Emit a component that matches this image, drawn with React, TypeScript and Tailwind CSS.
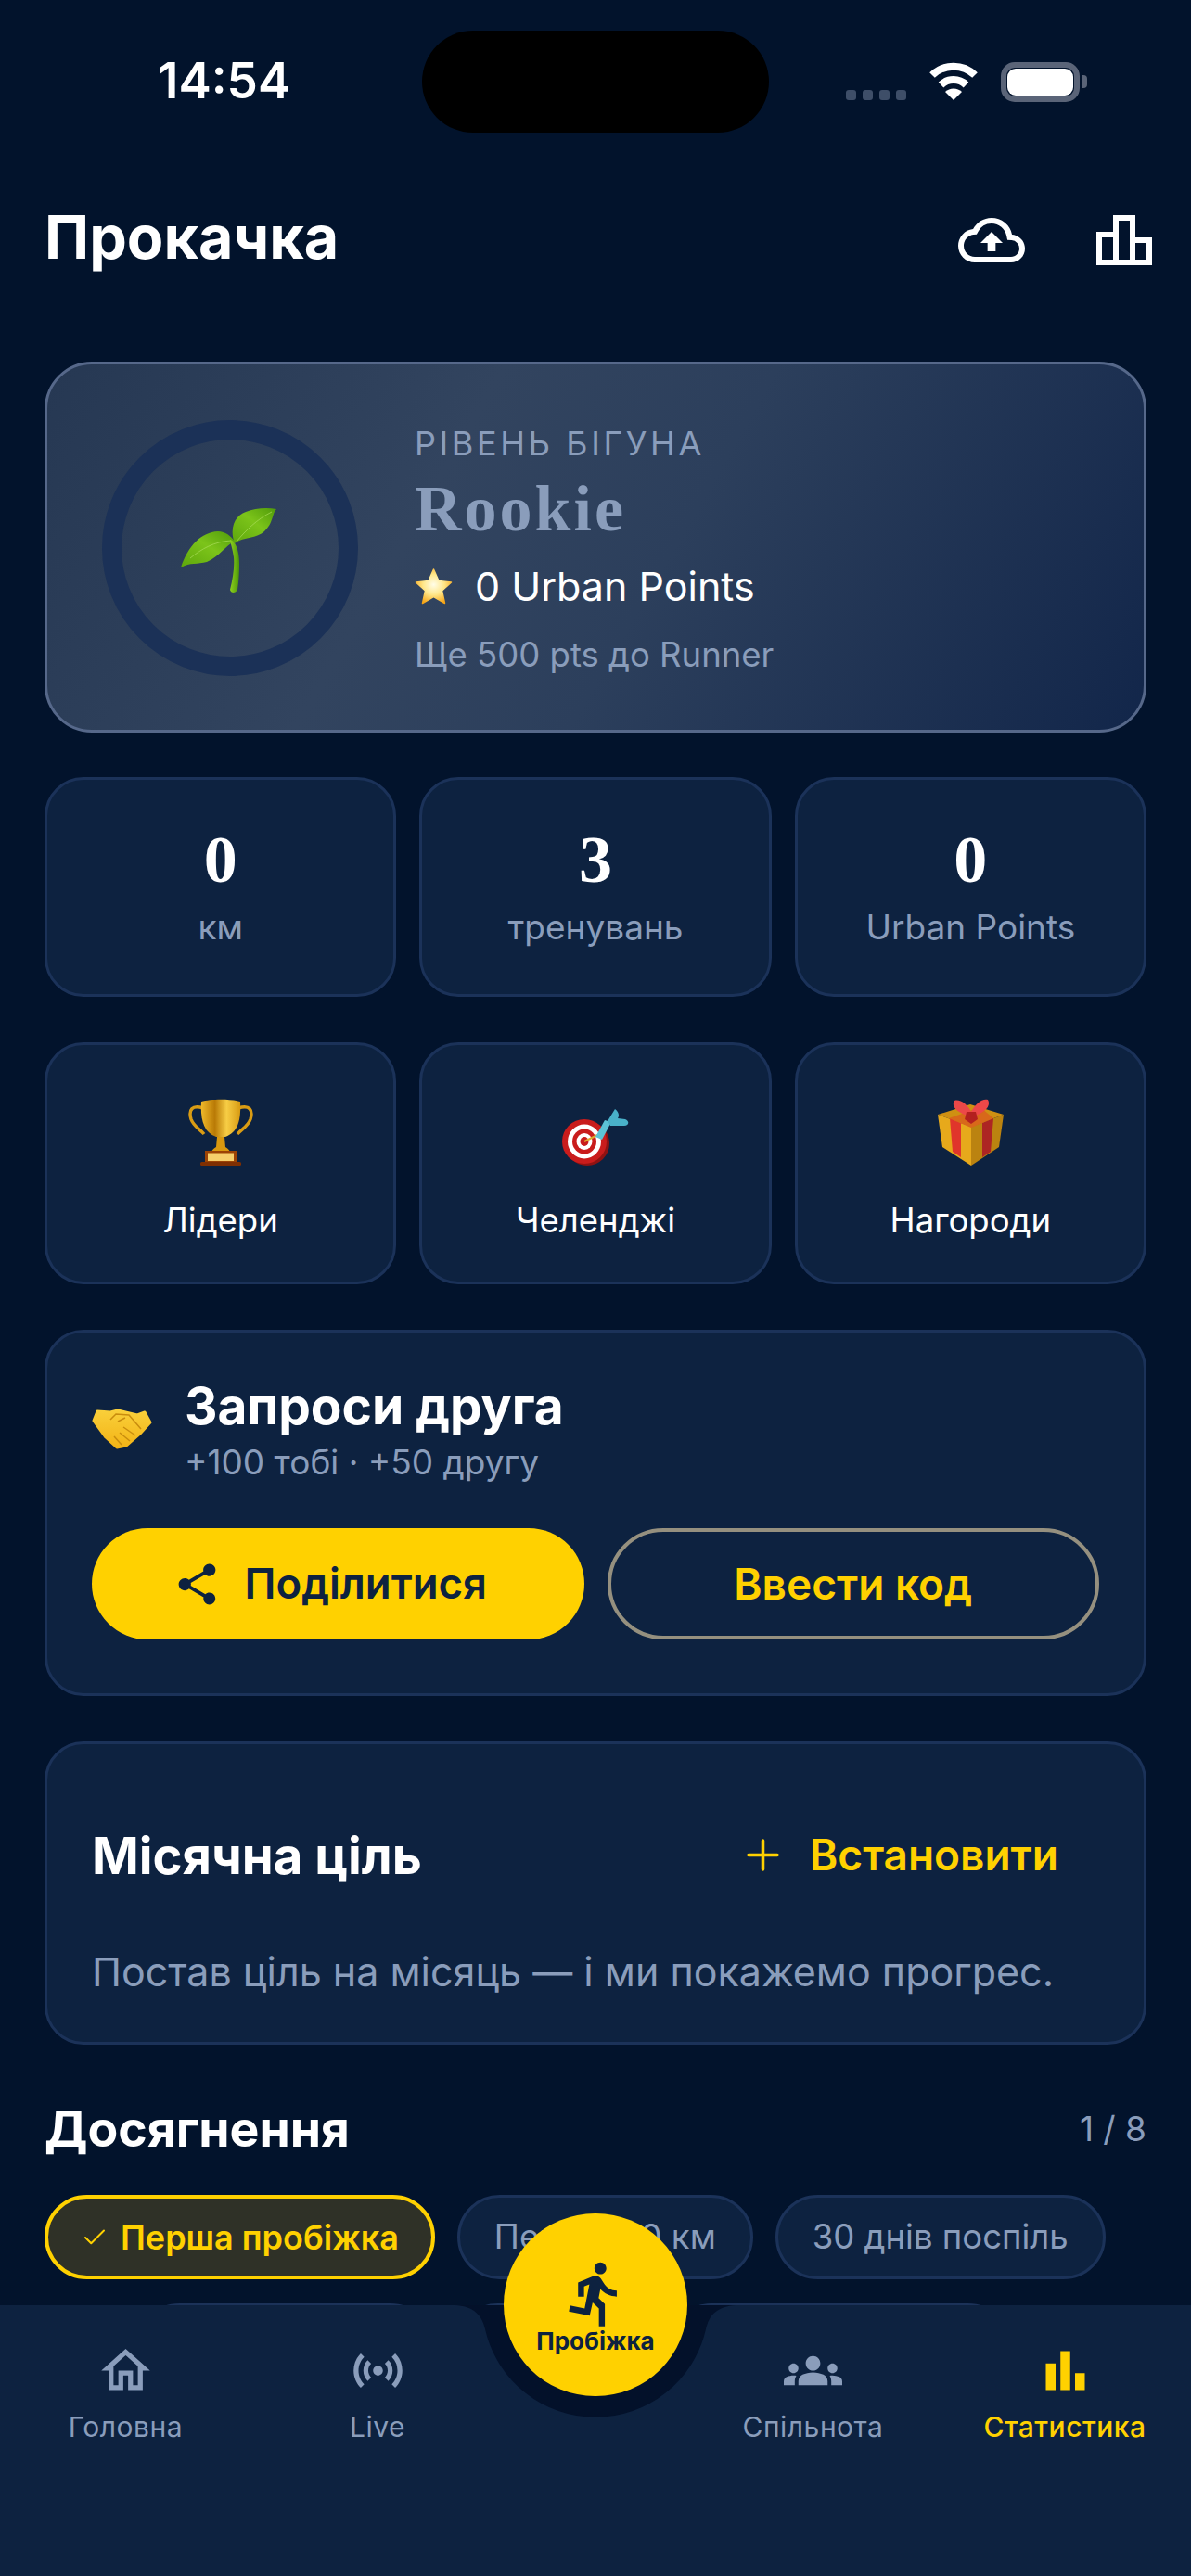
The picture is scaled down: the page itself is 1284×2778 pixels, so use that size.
// Прокачка screen
import React from 'react';
import { Check, Plus } from 'lucide-react';
import {
  MdBarChart,
  MdDirectionsRun,
  MdGroups,
  MdOutlineCloudUpload,
  MdOutlineHome,
  MdOutlineLeaderboard,
  MdSensors,
  MdShare,
} from 'react-icons/md';

const Sprout = () => (
  <svg className="mt-[8px]" width="110" height="98" viewBox="0 0 110 98">
    <defs>
      <linearGradient id="leafA" x1="0" y1="1" x2="1" y2="0">
        <stop offset="0" stopColor="#5da60c" />
        <stop offset="0.55" stopColor="#7cc41a" />
        <stop offset="1" stopColor="#4f9a0a" />
      </linearGradient>
      <linearGradient id="stem" x1="0" y1="0" x2="1" y2="0">
        <stop offset="0" stopColor="#8ed11f" />
        <stop offset="1" stopColor="#4c9608" />
      </linearGradient>
    </defs>
    <path d="M2 66C10 42 24 28 42 27C50 27 56 32 60 38C50 42 44 54 30 60C20 63 12 60 2 66Z" fill="url(#leafA)" />
    <path d="M60 40C54 24 60 10 72 6C82 2 94 1 105 3C100 8 102 18 92 27C84 35 68 33 60 40Z" fill="url(#leafA)" />
    <path d="M12 56C24 46 38 38 56 37M62 38C72 26 84 14 100 6" stroke="#a9dd5a" strokeWidth="1" fill="none" opacity="0.7" />
    <path d="M55 36C62 38 65 50 65 62C65 74 64 84 63 90C61 94 56 94 55 90C58 78 60 66 59 55C58 47 56 42 55 36Z" fill="url(#stem)" />
  </svg>
);

const Star = () => (
  <svg width="41" height="39" viewBox="0 0 41 39">
    <defs>
      <radialGradient id="starFill" cx="0.5" cy="0.45" r="0.6">
        <stop offset="0" stopColor="#fffde8" />
        <stop offset="0.5" stopColor="#ffe78a" />
        <stop offset="1" stopColor="#f6a313" />
      </radialGradient>
    </defs>
    <path
      d="M20.5 1L26 13.5L39.5 15L29.5 24L32.5 37.5L20.5 30.5L8.5 37.5L11.5 24L1.5 15L15 13.5Z"
      fill="url(#starFill)"
      stroke="url(#starFill)"
      strokeWidth="1.5"
      strokeLinejoin="round"
    />
  </svg>
);

const Trophy = () => (
  <svg width="70" height="72" viewBox="0 0 70 72">
    <defs>
      <linearGradient id="cup" x1="0" y1="0" x2="1" y2="0">
        <stop offset="0" stopColor="#f0b92a" />
        <stop offset="0.35" stopColor="#b97a06" />
        <stop offset="0.65" stopColor="#f7cd45" />
        <stop offset="1" stopColor="#d79a12" />
      </linearGradient>
    </defs>
    <path d="M16 10C4 6 0 12 3 22C6 30 12 32 17 38M54 10C66 6 70 12 67 22C64 30 58 32 53 38" stroke="#d99c14" strokeWidth="3.5" fill="none" />
    <path d="M14 3C24 0 46 0 56 3C57 22 54 36 40 41L30 41C16 36 13 22 14 3Z" fill="url(#cup)" />
    <path d="M31 41H39L40 52C43 54 44 55 45 57H25C26 55 27 54 30 52Z" fill="#d8980f" />
    <rect x="18" y="56" width="34" height="14" fill="#9c4305" />
    <rect x="21" y="58.500" width="28" height="8.500" fill="#f6cf6b" />
    <rect x="13" y="68" width="44" height="4" rx="1.500" fill="#7e2f02" />
  </svg>
);

const Dart = () => (
  <svg width="72" height="61" viewBox="0 0 72 61">
    <ellipse cx="27" cy="37" rx="24" ry="24" fill="#8f1212" />
    <ellipse cx="24" cy="35" rx="24" ry="24" fill="#c91c1c" />
    <ellipse cx="24" cy="35" rx="18" ry="18.500" fill="#fff" />
    <ellipse cx="24" cy="35" rx="13" ry="13.500" fill="#c91c1c" />
    <ellipse cx="24" cy="35" rx="8.500" ry="9" fill="#fff" />
    <ellipse cx="24" cy="35" rx="4.500" ry="5" fill="#c91c1c" />
    <path d="M24 35L38 28" stroke="#e0a82e" strokeWidth="2" />
    <path d="M36 30L46 12L53 14L43 33Z" fill="#5cc3d6" />
    <path d="M49 13L57 0C61 3 62 7 60 10L68 11C73 13 72 18 67 18L52 18Z" fill="#49b1c8" />
  </svg>
);

const Gift = () => (
  <svg width="71" height="72" viewBox="0 0 71 72">
    <path d="M0 17L35 6L71 17L36 30Z" fill="#cf9012" />
    <path d="M0 17L36 30V72L5 52Z" fill="#e7a91b" />
    <path d="M71 17L36 30V72L66 52Z" fill="#bb8310" />
    <path d="M13 21L25 26V63L16 57Z" fill="#e0352b" />
    <path d="M60 21L48 26V63L57 57Z" fill="#ad2523" />
    <path d="M12 21L46 9L60 21L36 31Z" fill="#d8681a" />
    <path d="M34 19C20 14 14 8 18 2C24 0 32 6 36 14C40 6 48 -1 54 1C58 8 50 15 38 19Z" fill="#ec4848" />
    <path d="M31 14H41L43 22L36 27L29 22Z" fill="#b3201f" />
  </svg>
);

const Handshake = () => (
  <svg width="66" height="44" viewBox="0 0 66 44">
    <defs>
      <linearGradient id="hands" x1="0" y1="0" x2="0" y2="1">
        <stop offset="0" stopColor="#f9cf3a" />
        <stop offset="1" stopColor="#f3b416" />
      </linearGradient>
    </defs>
    <path
      d="M2 13L6 3L20 4L28 2L49 7L57 4L63 15L53 26L37 40L27 42L15 31Z"
      fill="url(#hands)"
      stroke="url(#hands)"
      strokeWidth="3"
      strokeLinejoin="round"
    />
    <path d="M20 12L26 6L40 7L53 22M28 14L36 10M34 20L47 29M30 26L41 35M24 30L32 39" stroke="#c98d0e" strokeWidth="1.500" fill="none" />
  </svg>
);

const StatCard = ({ value, label }: { value: string; label: string }) => (
  <div className="h-[237px] rounded-[42px] border-[3px] border-[#1b3259] bg-[#0d2240] pt-[50px] text-center">
    <div className="font-['Liberation_Serif',serif] text-[72px] leading-[72px] font-bold text-white">{value}</div>
    <div className="mt-[15px] text-[37px] leading-[44px] text-[#8a9dbb]">{label}</div>
  </div>
);

const ActionCard = ({ icon, label }: { icon: React.ReactNode; label: string }) => (
  <div className="h-[261px] rounded-[42px] border-[3px] border-[#1b3259] bg-[#0d2240] pt-[58px] text-center">
    <div className="flex h-[72px] items-end justify-center">{icon}</div>
    <div className="mt-[37px] text-[36.500px] leading-[44px] text-white">{label}</div>
  </div>
);

const Chip = ({ label }: { label: string }) => (
  <div className="flex h-[91px] items-center rounded-full border-[3px] border-[#1b3259] bg-[#0d2240] px-[37px] text-[36.500px] text-[#8a9dbb]">
    {label}
  </div>
);

const NavItem = ({ icon, label, active }: { icon: React.ReactNode; label: string; active?: boolean }) => (
  <div className={`flex flex-col items-center ${active ? 'text-[#ffd100]' : 'text-[#8a9dbb]'}`}>
    {icon}
    <div className={`mt-[9px] text-[30px] leading-[40px] tracking-[0.5px] ${active ? 'font-medium' : ''}`}>{label}</div>
  </div>
);

export default function App() {
  return (
    <div className="relative h-[2778px] w-[1284px] overflow-hidden bg-[#02132c] font-['Inter',sans-serif] text-white">
      {/* status bar */}
      <div className="flex h-[143px] items-center pt-[33px] pl-[170px]">
        <div className="w-[285px] text-[53px] font-semibold">14:54</div>
        <div className="h-[110px] w-[374px] rounded-full bg-black" />
        <div className="ml-[83px] flex items-start">
          <div className="mt-[30px] flex gap-[7px]">
            <div className="h-[11px] w-[11px] rounded-[3px] bg-[#3e4e68]" />
            <div className="h-[11px] w-[11px] rounded-[3px] bg-[#3e4e68]" />
            <div className="h-[11px] w-[11px] rounded-[3px] bg-[#3e4e68]" />
            <div className="h-[11px] w-[11px] rounded-[3px] bg-[#3e4e68]" />
          </div>
          <svg className="ml-[23px]" width="56" height="41" viewBox="0 0 56 41">
            <path d="M5 14A33 33 0 0 1 51 14" stroke="#fff" strokeWidth="8" fill="none" />
            <path d="M14.500 24.500A19.500 19.500 0 0 1 41.500 24.500" stroke="#fff" strokeWidth="8" fill="none" />
            <path d="M28 41L19 32A13 13 0 0 1 37 32Z" fill="#fff" />
          </svg>
          <div className="ml-[23px] flex items-center">
            <div className="h-[43px] w-[85px] rounded-[15px] border-[6px] border-[#5a6478] p-[1px]">
              <div className="h-full w-full rounded-[9px] bg-white" />
            </div>
            <div className="ml-[3px] h-[14px] w-[5px] rounded-r-[4px] bg-[#5a6478]" />
          </div>
        </div>
      </div>

      {/* header */}
      <div className="mt-[80px] flex h-[72px] items-center justify-between pr-[36px] pl-[48px]">
        <div className="-mt-[6px] text-[64.500px] leading-[72px] font-bold">Прокачка</div>
        <div className="flex gap-[71px]">
          <MdOutlineCloudUpload size={72} />
          <MdOutlineLeaderboard size={72} />
        </div>
      </div>

      <div className="px-[48px]">
        {/* level card */}
        <div className="mt-[95px] flex h-[400px] items-center rounded-[51px] border-[3px] border-[#56688a] bg-[linear-gradient(120deg,#263853_0%,#32445f_35%,#2c3f5c_56%,#12264a_100%)] pl-[59px]">
          <div className="mt-[1px] flex h-[276px] w-[276px] items-center justify-center rounded-full border-[21px] border-[#1b3157]">
            <Sprout />
          </div>
          <div className="mt-[4px] ml-[61px]">
            <div className="text-[36px] leading-[44px] tracking-[3.600px] text-[#8a9dbb]">РІВЕНЬ БІГУНА</div>
            <div className="mt-[11px] font-['Liberation_Serif',serif] text-[70px] leading-[76px] font-bold tracking-[3px] text-[#8a9dbb]">Rookie</div>
            <div className="mt-[19px] flex h-[52px] items-center">
              <Star />
              <span className="ml-[24px] text-[43px] leading-[52px]">0 Urban Points</span>
            </div>
            <div className="mt-[26px] text-[36.500px] leading-[44px] text-[#8a9dbb]">Ще 500 pts до Runner</div>
          </div>
        </div>

        {/* stats */}
        <div className="mt-[48px] grid grid-cols-3 gap-[25px]">
          <StatCard value="0" label="км" />
          <StatCard value="3" label="тренувань" />
          <StatCard value="0" label="Urban Points" />
        </div>

        {/* shortcuts */}
        <div className="mt-[49px] grid grid-cols-3 gap-[25px]">
          <ActionCard icon={<Trophy />} label="Лідери" />
          <ActionCard icon={<Dart />} label="Челенджі" />
          <ActionCard icon={<Gift />} label="Нагороди" />
        </div>

        {/* invite */}
        <div className="mt-[49px] h-[395px] rounded-[42px] border-[3px] border-[#1b3259] bg-[#0d2240] px-[48px] pt-[46px]">
          <div className="flex items-center gap-[34px]">
            <Handshake />
            <div>
              <div className="text-[55px] leading-[66px] font-bold">Запроси друга</div>
              <div className="mt-[6px] text-[37px] leading-[44px] text-[#8a9dbb]">+100 тобі · +50 другу</div>
            </div>
          </div>
          <div className="mt-[49px] grid grid-cols-2 gap-[25px]">
            <div className="flex h-[120px] items-center justify-center gap-[25px] rounded-full bg-[#ffd100] pr-[18px] text-[45.500px] font-semibold text-[#0d2240]">
              <MdShare size={53} />
              Поділитися
            </div>
            <div className="flex h-[120px] items-center justify-center rounded-full border-[4px] border-[#95907f] text-[46px] font-semibold text-[#ffd100]">
              Ввести код
            </div>
          </div>
        </div>

        {/* monthly goal */}
        <div className="mt-[49px] h-[327px] rounded-[42px] border-[3px] border-[#1b3259] bg-[#0d2240] px-[48px] pt-[85px]">
          <div className="flex items-center justify-between pr-[44px]">
            <div className="text-[54.500px] leading-[66px] font-bold">Місячна ціль</div>
            <div className="flex items-center gap-[35px] text-[46px] font-semibold text-[#ffd100]">
              <Plus size={53} strokeWidth={1.6} className="-mx-[11px]" />
              Встановити
            </div>
          </div>
          <div className="mt-[63px] text-[43px] leading-[56px] text-[#8a9dbb]">Постав ціль на місяць — і ми покажемо прогрес.</div>
        </div>

        {/* achievements */}
        <div className="mt-[58px] flex items-center justify-between">
          <div className="text-[53.500px] leading-[66px] font-bold">Досягнення</div>
          <div className="text-[37px] text-[#8a9dbb]">1 / 8</div>
        </div>
        <div className="mt-[38px] flex gap-[24px]">
          <div className="flex h-[91px] items-center gap-[13px] rounded-full border-[4px] border-[#ffd100] bg-[#2f3127] pr-[35px] pl-[35px] text-[36px] font-semibold text-[#ffd100]">
            <Check size={30} strokeWidth={1.6} />
            Перша пробіжка
          </div>
          <Chip label="Перші 100 км" />
          <Chip label="30 днів поспіль" />
        </div>
        <div className="mt-[26px] flex gap-[25px] pl-[100px]">
          <div className="h-[91px] w-[318px] rounded-full border-[3px] border-[#1b3259] bg-[#0d2240]" />
          <div className="h-[91px] w-[205px] rounded-full border-[3px] border-[#1b3259] bg-[#0d2240]" />
          <div className="h-[91px] w-[368px] rounded-full border-[3px] border-[#1b3259] bg-[#0d2240]" />
        </div>
      </div>

      {/* bottom nav */}
      <div className="absolute top-[2486px] right-0 left-0 h-[292px] bg-[#0d2240]">
        <svg className="absolute top-0 left-[482px]" width="320" height="125" viewBox="0 0 320 125">
          <path d="M5 0C28 0 38 10 41.300 27A122 122 0 0 0 278.700 27C282 10 292 0 315 0Z" fill="#03112a" />
        </svg>
        <div className="relative grid grid-cols-[271px_272px_198px_271px_272px] pt-[39px]">
          <NavItem icon={<MdOutlineHome size={63} />} label="Головна" />
          <NavItem icon={<MdSensors size={63} />} label="Live" />
          <div />
          <NavItem icon={<MdGroups size={63} />} label="Спільнота" />
          <NavItem icon={<MdBarChart size={63} />} label="Статистика" active />
        </div>
        <div className="absolute -top-[99px] left-[543px] flex h-[197px] w-[198px] flex-col items-center rounded-full bg-[#ffd100] pt-[48px] text-[#0d2240]">
          <MdDirectionsRun size={77} />
          <div className="-mt-[3px] text-[26px] leading-[32px] font-bold">Пробіжка</div>
        </div>
      </div>
    </div>
  );
}
